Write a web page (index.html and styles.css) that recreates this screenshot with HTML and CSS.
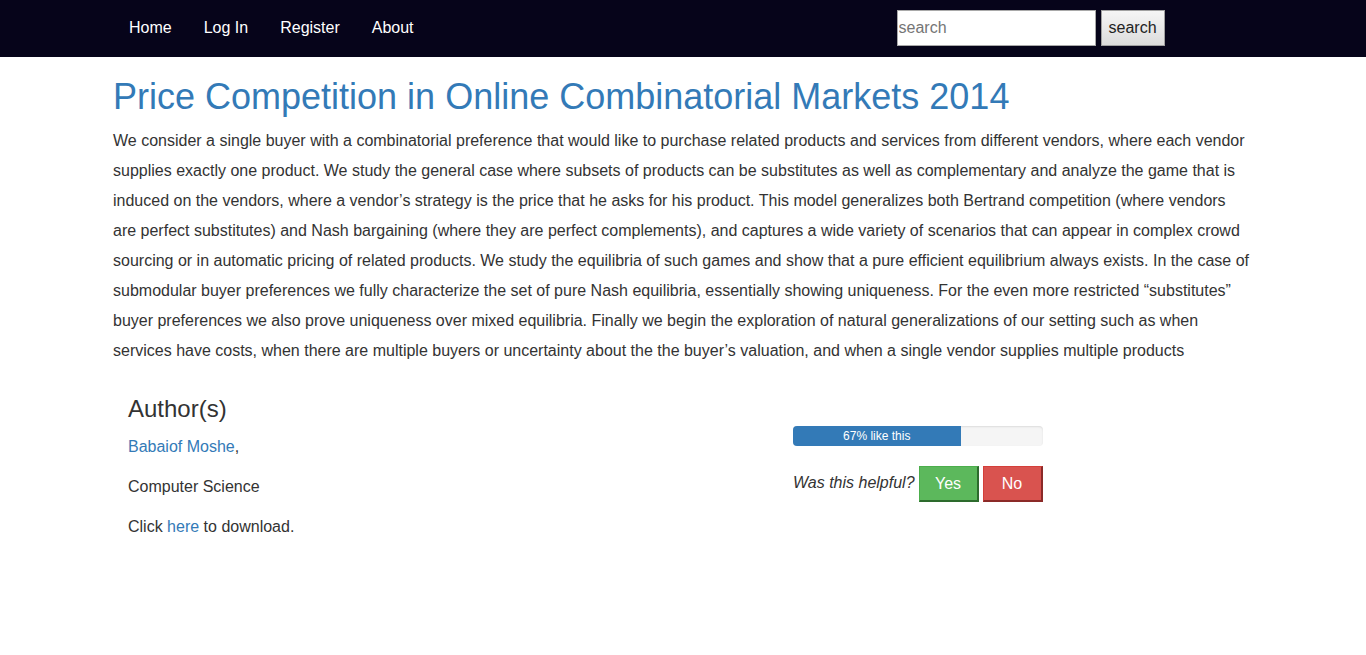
FILE: index.html
```html
<!DOCTYPE html>
<html>
<head>
<meta charset="utf-8">
<link rel="stylesheet" href="styles.css">
</head>
<body>
<nav class="navbar">
  <div class="container nav-inner">
    <ul class="nav-links">
      <li><a href="#">Home</a></li>
      <li><a href="#">Log In</a></li>
      <li><a href="#">Register</a></li>
      <li><a href="#">About</a></li>
    </ul>
    <form class="search-form">
      <input class="search-input" type="text" placeholder="search">
      <button class="search-btn" type="button">search</button>
    </form>
  </div>
</nav>
<main class="container">
  <h1 class="title">Price Competition in Online Combinatorial Markets 2014</h1>
  <p class="abstract">We consider a single buyer with a combinatorial preference that would like to purchase related products and services from different vendors, where each vendor supplies exactly one product. We study the general case where subsets of products can be substitutes as well as complementary and analyze the game that is induced on the vendors, where a vendor’s strategy is the price that he asks for his product. This model generalizes both Bertrand competition (where vendors are perfect substitutes) and Nash bargaining (where they are perfect complements), and captures a wide variety of scenarios that can appear in complex crowd sourcing or in automatic pricing of related products. We study the equilibria of such games and show that a pure efficient equilibrium always exists. In the case of submodular buyer preferences we fully characterize the set of pure Nash equilibria, essentially showing uniqueness. For the even more restricted “substitutes” buyer preferences we also prove uniqueness over mixed equilibria. Finally we begin the exploration of natural generalizations of our setting such as when services have costs, when there are multiple buyers or uncertainty about the the buyer’s valuation, and when a single vendor supplies multiple products</p>
  <div class="details">
    <div class="authors">
      <h3 class="authors-title">Author(s)</h3>
      <p><a href="#">Babaiof Moshe</a>,</p>
      <p>Computer Science</p>
      <p>Click <a href="#">here</a> to download.</p>
    </div>
    <div class="feedback">
      <div class="progress"><div class="progress-bar" style="width:67%">67% like this</div></div>
      <div class="helpful">
        <em>Was this helpful?</em>
        <button class="btn btn-yes" type="button">Yes</button>
        <button class="btn btn-no" type="button">No</button>
      </div>
    </div>
  </div>
</main>
</body>
</html>
```
FILE: styles.css
```css
* { box-sizing: border-box; }
body {
  margin: 0;
  font-family: "Liberation Sans", Arial, sans-serif;
  font-size: 16px;
  line-height: 1.42857;
  color: #333;
  background: #fff;
}
a { color: #337ab7; text-decoration: none; }
.container {
  width: 1170px;
  margin: 0 auto;
  padding: 0 15px;
}
.navbar {
  background: #06041a;
  height: 57px;
}
.nav-inner {
  display: flex;
  align-items: flex-start;
  height: 57px;
}
.nav-links {
  list-style: none;
  margin: 0;
  padding: 0;
  display: flex;
}
.nav-links a {
  display: block;
  color: #fff;
  padding: 0 16px;
  line-height: 55px;
  font-size: 16px;
}
.search-form {
  margin-left: 467px;
  margin-top: 10px;
  display: flex;
  gap: 5px;
  align-items: center;
}
.search-input {
  width: 199px;
  height: 36px;
  border: 1px solid #a9a9a9;
  padding: 0 1px;
  font-family: "Liberation Sans", Arial, sans-serif;
  font-size: 16px;
  color: #333;
  background: #fff;
}
.search-input::placeholder { color: #757575; }
.search-btn {
  width: 64px;
  height: 36px;
  border: 1px solid #a0a0a0;
  background: linear-gradient(#f5f5f5, #dcdcdc);
  font-family: "Liberation Sans", Arial, sans-serif;
  font-size: 16px;
  color: #222;
  padding: 0;
}
.title {
  margin: 20px 0 9px;
  font-size: 36px;
  font-weight: 500;
  line-height: 1.1;
  color: #337ab7;
}
.abstract {
  margin: 0 0 10px;
  line-height: 30px;
}
.details {
  display: flex;
  padding: 0 15px;
}
.authors {
  width: 665px;
}
.authors-title {
  margin: 20px 0 10px;
  font-size: 24px;
  font-weight: 500;
  line-height: 1.1;
}
.authors p {
  margin: 0 0 10px;
  line-height: 30px;
}
.feedback {
  padding-top: 50px;
  width: 250px;
}
.progress {
  height: 20px;
  background: #f5f5f5;
  border-radius: 4px;
  overflow: hidden;
  box-shadow: inset 0 1px 2px rgba(0,0,0,.1);
}
.progress-bar {
  height: 20px;
  background: #337ab7;
  color: #fff;
  font-size: 12px;
  line-height: 20px;
  text-align: center;
}
.helpful {
  margin-top: 20px;
  display: flex;
  align-items: center;
  gap: 4px;
  white-space: nowrap;
}
.helpful em { font-size: 16px; }
.btn {
  width: 60px;
  height: 36px;
  border: 1px solid transparent;
  font-family: "Liberation Sans", Arial, sans-serif;
  font-size: 16px;
  color: #fff;
  padding: 2px 0 0;
  flex: none;
}
.btn-yes {
  background: #5cb85c;
  border-color: #4cae4c #2d6b2d #2d6b2d #4cae4c;
  border-width: 1px 2px 2px 1px;
}
.btn-no {
  background: #d9534f;
  border-color: #d43f3a #8b2a28 #8b2a28 #d43f3a;
  border-width: 1px 2px 2px 1px;
}
```
